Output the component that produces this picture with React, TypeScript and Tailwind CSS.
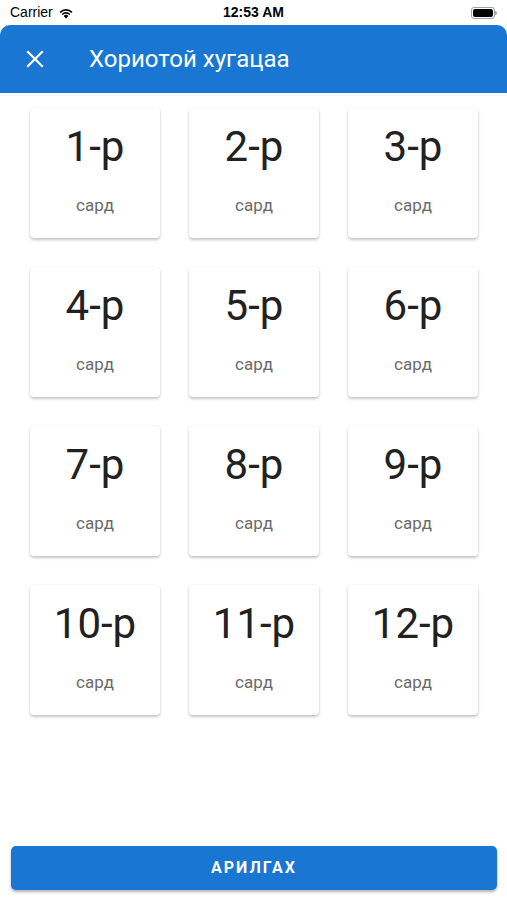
import React from "react";

const months = Array.from({ length: 12 }, (_, i) => `${i + 1}-р`);

export default function App() {
  return (
    <div className="w-[507px] h-[900px] bg-white flex flex-col overflow-hidden" style={{ fontFamily: "Roboto, 'Noto Sans', sans-serif" }}>
      {/* status bar */}
      <div className="h-[25px] flex items-center justify-between px-[10px] relative shrink-0">
        <div className="flex items-center gap-[5px] text-[14px] text-black" style={{ fontFamily: "'Liberation Sans', sans-serif" }}>
          <span>Carrier</span>
          <svg width="16" height="12" viewBox="0 0 16 12">
            <path d="M8 11.5 L5.6 8.9 A3.5 3.5 0 0 1 10.4 8.9 Z" fill="black" />
            <path d="M3.6 6.9 A6.3 6.3 0 0 1 12.4 6.9 L11.2 8.1 A4.6 4.6 0 0 0 4.8 8.1 Z" fill="black" />
            <path d="M1.5 4.7 A9.3 9.3 0 0 1 14.5 4.7 L13.3 5.9 A7.6 7.6 0 0 0 2.7 5.9 Z" fill="black" />
          </svg>
        </div>
        <div className="absolute left-1/2 -translate-x-1/2 text-[14px] font-bold text-black" style={{ fontFamily: "'Liberation Sans', sans-serif" }}>12:53 AM</div>
        <div className="flex items-center">
          <div className="w-[24px] h-[12px] rounded-[3px] border border-gray-400 p-[1px]">
            <div className="w-full h-full bg-black rounded-[2px]" />
          </div>
          <div className="w-[2px] h-[4px] bg-gray-400 rounded-r-sm" />
        </div>
      </div>
      {/* header */}
      <div className="h-[68px] bg-[#1976d2] rounded-t-[10px] flex items-center shrink-0">
        <svg className="ml-[26px]" width="18" height="18" viewBox="0 0 18 18">
          <path d="M2 2 L16 16 M16 2 L2 16" stroke="white" strokeWidth="2.2" strokeLinecap="square" />
        </svg>
        <span className="ml-[45px] text-white text-[24px] leading-[28px]">Хориотой хугацаа</span>
      </div>
      {/* grid */}
      <div className="grid grid-cols-3 gap-[29px] pl-[30px] pr-[29px] pt-[15px]">
        {months.map((m) => (
          <div key={m} className="h-[130px] bg-white rounded-[4px] shadow-[0_2px_3px_rgba(0,0,0,0.22),0_0_2px_rgba(0,0,0,0.08)] flex flex-col items-center">
            <div className="mt-[18px] text-[42px] leading-[42px] text-[#212121]">{m}</div>
            <div className="mt-[27px] text-[17px] leading-[20px] text-[#6b6b6b]">сард</div>
          </div>
        ))}
      </div>
      <div className="flex-1" />
      <div className="px-[11px] pb-[10px] pr-[10px]">
        <button className="w-full h-[44px] bg-[#1976d2] rounded-[5px] text-white text-[16px] font-bold tracking-[2px] shadow-[0_2px_3px_rgba(0,0,0,0.3)]">
          АРИЛГАХ
        </button>
      </div>
    </div>
  );
}
